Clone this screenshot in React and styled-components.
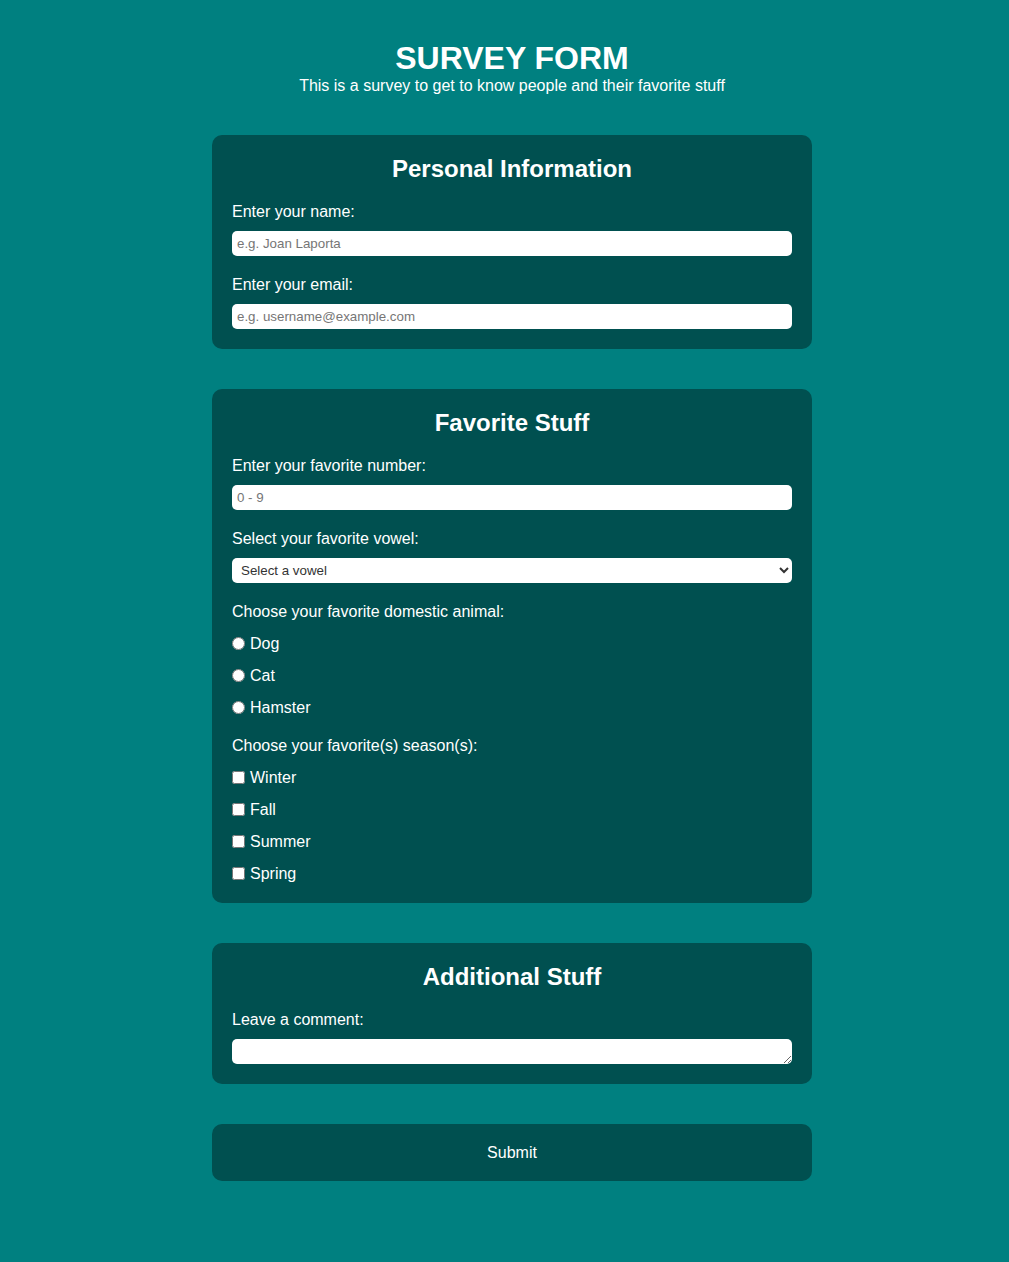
import React from "react";
import styled, { createGlobalStyle } from "styled-components";

const GlobalStyle = createGlobalStyle`
  html, body {
    margin: 0;
    padding: 0;
    background: #008080;
  }
  body {
    font-family: "Liberation Sans", Arial, sans-serif;
    color: #fff;
    min-height: 100vh;
  }
  * {
    box-sizing: border-box;
  }
`;

const Page = styled.div`
  padding: 40px 0 81px 15px;
`;

const Header = styled.header`
  text-align: center;
  margin-bottom: 40px;
  h1 {
    margin: 0;
    font-size: 32px;
    line-height: 36px;
    font-weight: bold;
  }
  p {
    margin: 1px 0 0;
    font-size: 16px;
    line-height: 18px;
  }
`;

const Form = styled.form`
  width: 600px;
  margin: 0 auto;
  display: flex;
  flex-direction: column;
  gap: 40px;
`;

const Card = styled.fieldset`
  margin: 0;
  border: none;
  background: #005050;
  border-radius: 10px;
  padding: 20px;
  display: flex;
  flex-direction: column;
  gap: 20px;
`;

const CardTitle = styled.h2`
  margin: 0 0 1px;
  font-size: 24px;
  line-height: 27px;
  text-align: center;
`;

const Field = styled.div`
  display: flex;
  flex-direction: column;
  gap: ${(p) => (p.$options ? "14px" : "10px")};
`;

const Label = styled.label`
  font-size: 16px;
  line-height: 18px;
`;

const TextInput = styled.input`
  height: 25px;
  width: 100%;
  border: none;
  border-radius: 5px;
  background: #fff;
  padding: 0 5px;
  font-family: "Liberation Sans", Arial, sans-serif;
  font-size: 13.333px;
  color: #222;
  &::placeholder {
    color: #767676;
  }
`;

const Select = styled.select`
  height: 25px;
  width: 100%;
  border: none;
  border-radius: 5px;
  background: #fff;
  padding: 0 5px;
  font-family: "Liberation Sans", Arial, sans-serif;
  font-size: 13.333px;
  color: #333;
`;

const TextArea = styled.textarea`
  display: block;
  height: 25px;
  width: 100%;
  border: none;
  border-radius: 5px;
  background: #fff;
  padding: 3px 5px;
  font-family: "Liberation Sans", Arial, sans-serif;
  font-size: 13.333px;
`;

const Options = styled.div`
  display: flex;
  flex-direction: column;
  gap: 14px;
`;

const Option = styled.label`
  display: flex;
  align-items: flex-start;
  font-size: 16px;
  line-height: 18px;
  input {
    margin: 2px 5px 0 0;
    width: 13px;
    height: 13px;
  }
`;

const SubmitButton = styled.button`
  height: 57px;
  width: 100%;
  border: none;
  border-radius: 10px;
  background: #005050;
  color: #fff;
  font-family: "Liberation Sans", Arial, sans-serif;
  font-size: 16px;
  cursor: pointer;
`;

const animals = ["Dog", "Cat", "Hamster"];
const seasons = ["Winter", "Fall", "Summer", "Spring"];

export default function App() {
  return (
    <>
      <GlobalStyle />
      <Page>
        <Header>
          <h1>SURVEY FORM</h1>
          <p>This is a survey to get to know people and their favorite stuff</p>
        </Header>
        <Form onSubmit={(e) => e.preventDefault()}>
          <Card>
            <CardTitle>Personal Information</CardTitle>
            <Field>
              <Label htmlFor="name">Enter your name:</Label>
              <TextInput id="name" type="text" placeholder="e.g. Joan Laporta" />
            </Field>
            <Field>
              <Label htmlFor="email">Enter your email:</Label>
              <TextInput id="email" type="email" placeholder="e.g. username@example.com" />
            </Field>
          </Card>

          <Card>
            <CardTitle>Favorite Stuff</CardTitle>
            <Field>
              <Label htmlFor="number">Enter your favorite number:</Label>
              <TextInput id="number" type="number" placeholder="0 - 9" />
            </Field>
            <Field>
              <Label htmlFor="vowel">Select your favorite vowel:</Label>
              <Select id="vowel" defaultValue="">
                <option value="" disabled>
                  Select a vowel
                </option>
                <option>A</option>
                <option>E</option>
                <option>I</option>
                <option>O</option>
                <option>U</option>
              </Select>
            </Field>
            <Field $options>
              <Label as="span">Choose your favorite domestic animal:</Label>
              <Options>
                {animals.map((a) => (
                  <Option key={a}>
                    <input type="radio" name="animal" value={a} />
                    {a}
                  </Option>
                ))}
              </Options>
            </Field>
            <Field $options>
              <Label as="span">Choose your favorite(s) season(s):</Label>
              <Options>
                {seasons.map((s) => (
                  <Option key={s}>
                    <input type="checkbox" name="season" value={s} />
                    {s}
                  </Option>
                ))}
              </Options>
            </Field>
          </Card>

          <Card>
            <CardTitle>Additional Stuff</CardTitle>
            <Field>
              <Label htmlFor="comment">Leave a comment:</Label>
              <TextArea id="comment" />
            </Field>
          </Card>

          <SubmitButton type="submit">Submit</SubmitButton>
        </Form>
      </Page>
    </>
  );
}
